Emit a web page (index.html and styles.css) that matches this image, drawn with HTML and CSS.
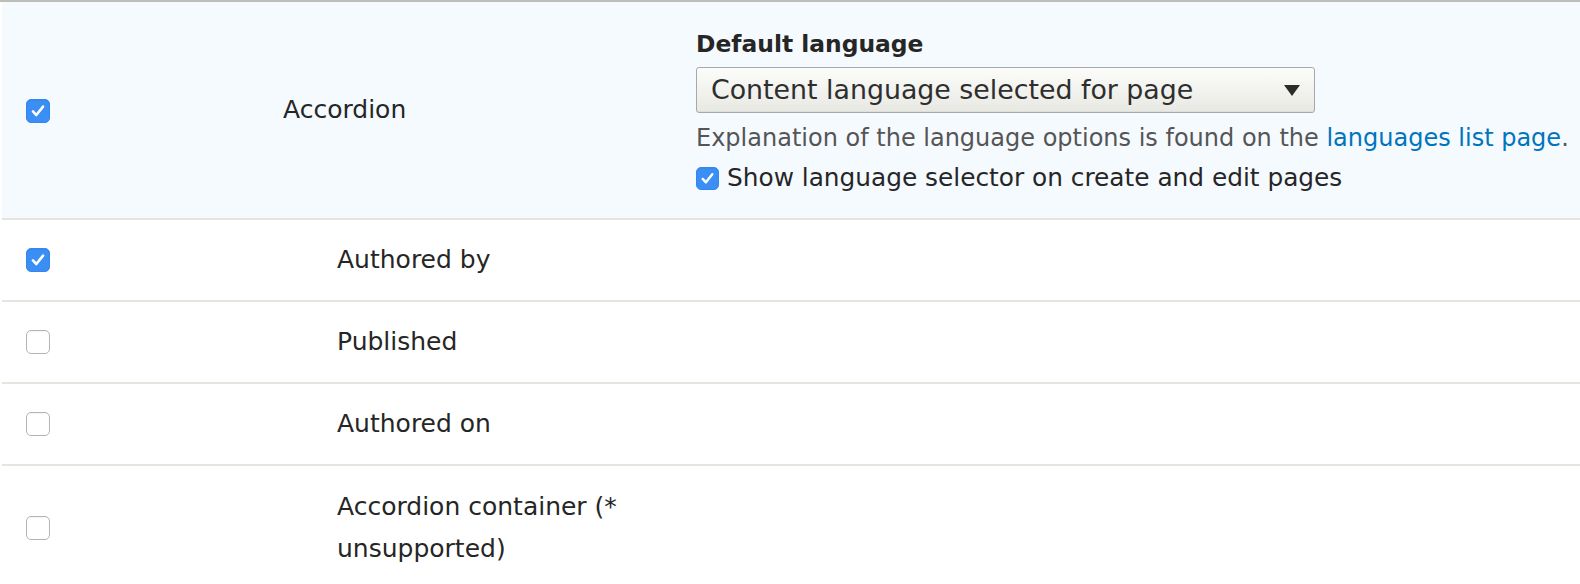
FILE: index.html
```html
<!DOCTYPE html>
<html lang="en">
<head>
<meta charset="utf-8">
<title>Content language settings</title>
<link rel="stylesheet" href="styles.css">
</head>
<body>
<div class="table">
  <div class="row row--selected">
    <div class="cell cell-check"><span class="cb cb--on"><svg viewBox="0 0 24 24"><path d="M6.5 12.5 L10.2 16.4 L17.5 7.2"/></svg></span></div>
    <div class="cell cell-label">Accordion</div>
    <div class="cell cell-settings">
      <div class="heading">Default language</div>
      <div class="select"><span class="select-text">Content language selected for page</span><span class="arrow"></span></div>
      <div class="desc">Explanation of the language options is found on the <a href="#">languages list page</a>.</div>
      <label class="opt"><span class="cb cb--on cb--small"><svg viewBox="0 0 24 24"><path d="M6.5 12.5 L10.2 16.4 L17.5 7.2"/></svg></span><span>Show language selector on create and edit pages</span></label>
    </div>
  </div>
  <div class="row">
    <div class="cell cell-check"><span class="cb cb--on"><svg viewBox="0 0 24 24"><path d="M6.5 12.5 L10.2 16.4 L17.5 7.2"/></svg></span></div>
    <div class="cell cell-label field">Authored by</div>
    <div class="cell cell-settings"></div>
  </div>
  <div class="row">
    <div class="cell cell-check"><span class="cb"></span></div>
    <div class="cell cell-label field">Published</div>
    <div class="cell cell-settings"></div>
  </div>
  <div class="row">
    <div class="cell cell-check"><span class="cb"></span></div>
    <div class="cell cell-label field">Authored on</div>
    <div class="cell cell-settings"></div>
  </div>
  <div class="row">
    <div class="cell cell-check"><span class="cb"></span></div>
    <div class="cell cell-label field">Accordion container (* unsupported)</div>
    <div class="cell cell-settings"></div>
  </div>
</div>
</body>
</html>
```
FILE: styles.css
```css
html, body {
  margin: 0;
  padding: 0;
  background: #ffffff;
}
body {
  font-family: "DejaVu Sans", "Liberation Sans", sans-serif;
  color: #262626;
  overflow: hidden;
}
.table {
  border-top: 2px solid #bdbeb9;
  padding-left: 2px;
}
.row {
  display: grid;
  grid-template-columns: 257px 437px 1fr;
  align-items: center;
  border-bottom: 2px solid #e6e4df;
  background: #ffffff;
}
.row--selected {
  background: #f5faff;
}
.cell {
  box-sizing: border-box;
}
.cell-check {
  padding-left: 24px;
  display: flex;
  align-items: center;
}
.row--selected .cell-check {
  padding-top: 2px;
}
.cell-label {
  padding: 19px 24px;
  font-size: 25px;
  line-height: 42px;
}
.cell-label.field {
  padding-left: 78px;
}
.row:last-child .cell-label {
  padding-top: 20px;
}
.cell-settings {
  padding: 28px 0 26px 0;
}
.row:not(.row--selected) .cell-settings {
  padding: 0;
}
.cb {
  box-sizing: border-box;
  display: inline-flex;
  width: 24px;
  height: 24px;
  border-radius: 5px;
  background: #ffffff;
  border: 1px solid #b4b4b4;
  box-shadow: inset 0 1px 1px rgba(0,0,0,0.04);
  flex: none;
}
.cb--on {
  background: #3a8ef4;
  border-color: #3586ee;
}
.cb svg {
  width: 100%;
  height: 100%;
}
.cb svg path {
  fill: none;
  stroke: #ffffff;
  stroke-width: 2.8;
  stroke-linecap: round;
  stroke-linejoin: round;
}
.cb--small {
  width: 23px;
  height: 23px;
}
.heading {
  font-weight: bold;
  font-size: 23.4px;
  line-height: 28px;
}
.select {
  box-sizing: border-box;
  margin-top: 9px;
  width: 619px;
  height: 46px;
  border: 1px solid #a8a8a8;
  border-radius: 3px;
  background: linear-gradient(#fcfcfa, #e8e8e3);
  display: flex;
  align-items: center;
  justify-content: space-between;
  padding: 0 14px 0 14px;
  box-shadow: inset 0 -1px 0 rgba(0,0,0,0.04);
}
.select-text {
  font-size: 26.8px;
  line-height: 30px;
  color: #2e2e2e;
}
.arrow {
  width: 0;
  height: 0;
  border-left: 8px solid transparent;
  border-right: 8px solid transparent;
  border-top: 11px solid #2b2b2b;
}
.desc {
  margin-top: 11px;
  font-size: 24px;
  line-height: 28px;
  color: #555555;
  white-space: nowrap;
}
.desc a {
  color: #0074bd;
  text-decoration: none;
}
.opt {
  margin-top: 12px;
  display: flex;
  align-items: center;
  gap: 8px;
  font-size: 24.8px;
  line-height: 28px;
  white-space: nowrap;
}
```
